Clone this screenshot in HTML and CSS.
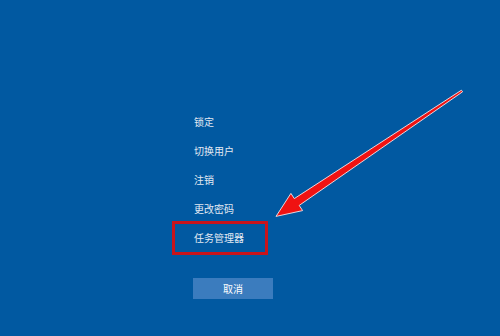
FILE: index.html
```html
<!DOCTYPE html>
<html>
<head>
    <title>安全选项</title>
    <meta name="viewport" content="width=device-width, initial-scale=1.0">
    <link rel="stylesheet" href="styles.css">
</head>
<body>
    <div class="screen">
        <ul class="menu">
            <li class="item">锁定</li>
            <li class="item">切换用户</li>
            <li class="item">注销</li>
            <li class="item">更改密码</li>
            <li class="item marked">任务管理器</li>
        </ul>
        <button class="cancel">取消</button>

        <svg class="arrow" width="500" height="336" viewBox="0 0 500 336">
            <polygon points="461.4,90.2 462.6,91.8 299.2,205.4 302.6,210.6 276,216.4 290.9,193.4 294.3,198.6"
                     fill="#f01212" stroke="#f4e6ea" stroke-width="0.9" stroke-linejoin="miter"/>
        </svg>
    </div>
</body>
</html>
```

FILE: styles.css
```css
body {
    margin: 0;
    background-color: #0159a1;
    font-family: "Noto Sans CJK SC", "Noto Sans", sans-serif;
}
.screen {
    position: relative;
    width: 500px;
    height: 336px;
    overflow: hidden;
    padding: 107px 0 0 194px;
    box-sizing: border-box;
}
.menu {
    list-style: none;
    margin: 0;
    padding: 0;
}
.item {
    line-height: 29px;
    font-size: 10px;
    color: #e3eaf3;
}
.item.marked {
    width: 71px;
    line-height: 28px;
    margin: -2.5px 0 -2.5px -22px;
    padding-left: 19px;
    border: 3px solid #c8141c;
}
.cancel {
    display: block;
    margin: 26px 0 0 -1px;
    width: 80px;
    height: 21px;
    padding: 0;
    border: none;
    background-color: #3b7cbe;
    color: #ffffff;
    font-family: inherit;
    font-size: 10px;
}
.arrow {
    position: absolute;
    left: 0;
    top: 0;
}
```
